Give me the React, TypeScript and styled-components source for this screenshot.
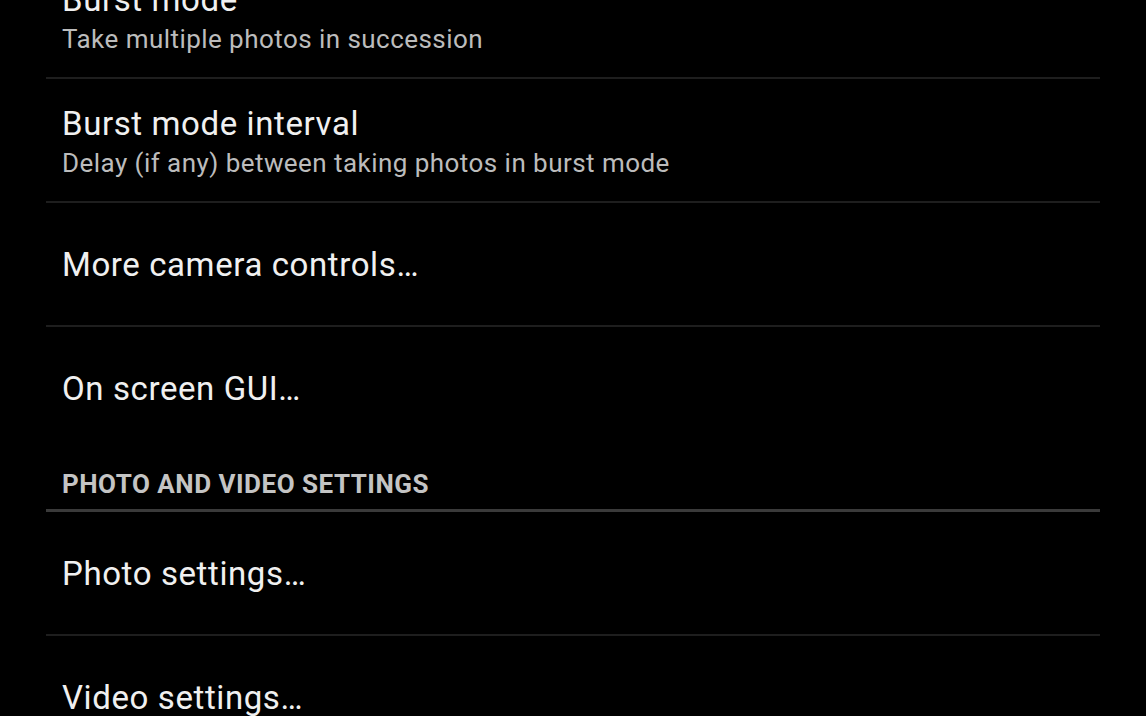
import React from "react";
import styled, { createGlobalStyle } from "styled-components";

const GlobalStyle = createGlobalStyle`
  html, body {
    margin: 0;
    padding: 0;
    background: #000;
    overflow: hidden;
  }
  body {
    font-family: Roboto, "Noto Sans", "DejaVu Sans", sans-serif;
    -webkit-font-smoothing: antialiased;
  }
`;

const Screen = styled.div`
  width: 1146px;
  height: 716px;
  background: #000;
  overflow: hidden;
`;

const List = styled.div`
  margin: -45px 46px 0 46px;
  display: flex;
  flex-direction: column;
`;

const Row = styled.div<{ $divider?: boolean }>`
  display: flex;
  flex-direction: column;
  justify-content: center;
  padding: 2px 16px 0;
  box-sizing: border-box;
  border-bottom: ${(p) => (p.$divider ? "2px solid #1e1e1e" : "none")};
  height: ${(p) => (p.$divider ? "124px" : "122px")};
  gap: 5px;
`;

const Title = styled.div`
  font-size: 33px;
  line-height: 38px;
  letter-spacing: 0.6px;
  color: #f0f0f0;
  font-weight: 400;
  white-space: nowrap;
`;

const Summary = styled.div`
  font-size: 26px;
  line-height: 30px;
  letter-spacing: 0.45px;
  color: #bcbcbc;
  white-space: nowrap;
`;

const Category = styled.div`
  height: 63px;
  box-sizing: border-box;
  display: flex;
  align-items: flex-end;
  padding: 0 16px 10px;
  border-bottom: 3px solid #3a3a3a;
  font-size: 26px;
  line-height: 30px;
  letter-spacing: 0.5px;
  font-weight: 700;
  color: #c4c4c4;
  white-space: nowrap;
`;

type Item = { title: string; summary?: string; divider?: boolean };

const Pref = ({ title, summary, divider }: Item) => (
  <Row $divider={divider}>
    <Title>{title}</Title>
    {summary && <Summary>{summary}</Summary>}
  </Row>
);

export default function App() {
  return (
    <Screen>
      <GlobalStyle />
      <List>
        <Pref title="Burst mode" summary="Take multiple photos in succession" divider />
        <Pref
          title="Burst mode interval"
          summary="Delay (if any) between taking photos in burst mode"
          divider
        />
        <Pref title="More camera controls…" divider />
        <Pref title="On screen GUI…" />
        <Category>PHOTO AND VIDEO SETTINGS</Category>
        <Pref title="Photo settings…" divider />
        <Pref title="Video settings…" />
      </List>
    </Screen>
  );
}
